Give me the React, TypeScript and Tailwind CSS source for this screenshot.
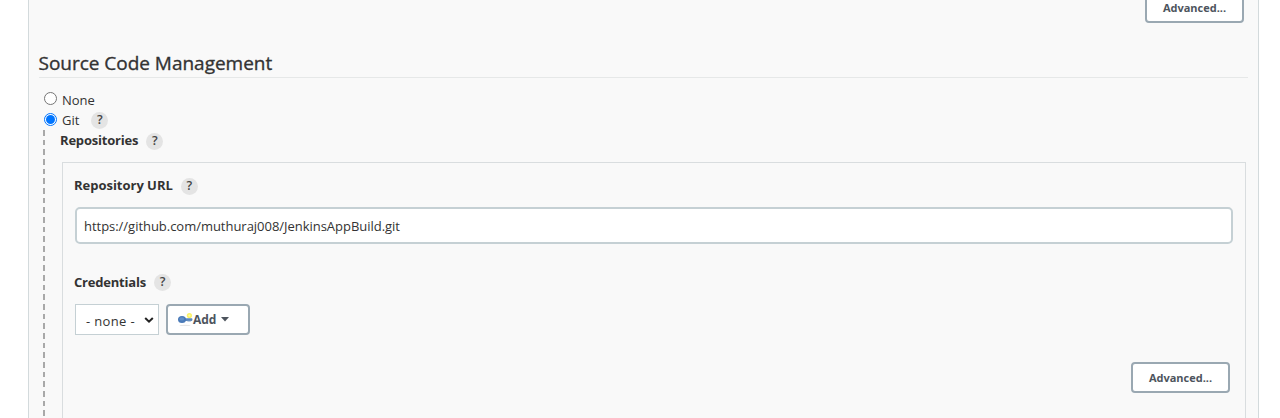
import React from "react";

function Help({ className = "" }: { className?: string }) {
  return (
    <span className={`flex h-[17px] w-[17px] items-center justify-center rounded-full bg-[#e4e4e4] text-[12.5px] font-semibold leading-none tracking-normal text-[#444] ${className}`}>
      ?
    </span>
  );
}

function AdvancedButton() {
  return (
    <button className="flex h-[31px] w-[99px] items-center justify-center rounded-[4px] border-2 border-[#9aa8b2] bg-white text-[11px] font-bold leading-none text-[#4d545d]">
      <span>Advanced...</span>
    </button>
  );
}

function KeyIcon() {
  return (
    <svg className="h-4 w-4 shrink-0" viewBox="0 0 16 16">
      <ellipse cx="8" cy="13.4" rx="5.5" ry="0.7" fill="#e6e6e6" />
      <circle cx="12.4" cy="3.6" r="2.6" fill="#fbf266" />
      <circle cx="12.4" cy="3.6" r="1.1" fill="#fffbb0" />
      <path d="M7 6.2h7.6q.8 0 .8.9v1q0 .8-.8.8H7z" fill="#5b87bd" />
      <path d="M10.4 8.6h3.4v.9h-3.4z" fill="#7c9fc9" />
      <ellipse cx="5" cy="7.6" rx="4" ry="3.5" fill="#4a7ab8" />
      <ellipse cx="4.8" cy="6.9" rx="2.4" ry="1.7" fill="#628fc8" />
    </svg>
  );
}

export default function App() {
  return (
    <div className="h-[418px] overflow-hidden bg-white pl-7 pr-[21px] font-['Open_Sans','Noto_Sans',sans-serif] text-[13px] text-[#333]">
      <div className="flex h-full flex-col border-x border-[#d3dadc] bg-[#f9f9f9] pl-[10px] pr-[10px]">
        <div className="-mt-2 mr-1 flex shrink-0 justify-end">
          <AdvancedButton />
        </div>
        <h2 className="mt-[26px] flex h-[29px] shrink-0 items-center border-b border-[#e6e8e8] text-[19px] leading-none text-[#333] [-webkit-text-stroke:0.35px_#333]">
          <span className="-ml-[0.5px] tracking-[-0.02px]">Source Code Management</span>
        </h2>
        <div className="mt-[12px] flex h-5 shrink-0 items-center pl-[5px]">
          <span className="mb-[3px] h-[13px] w-[13px] rounded-full border border-[#767676] bg-white" />
          <span className="ml-[5px] pt-[2px]">None</span>
        </div>
        <div className="flex h-5 shrink-0 items-center pl-[5px]">
          <span className="mb-[2px] flex h-[13px] w-[13px] items-center justify-center rounded-full border border-[#0075ff] bg-white">
            <span className="h-[9px] w-[9px] rounded-full bg-[#0075ff]" />
          </span>
          <span className="ml-[5px] pt-[2px]">Git</span>
          <Help className="ml-[12px]" />
        </div>
        <div className="flex min-h-0 flex-1 pl-[4px]">
          <div className="w-[2px] shrink-0 bg-[repeating-linear-gradient(to_bottom,#a9a9a9_0px,#a9a9a9_5.7px,transparent_5.7px,transparent_9.67px)]" />
          <div className="flex min-w-0 flex-1 flex-col pl-[15px]">
            <div className="flex h-[22px] shrink-0 items-center font-bold">
              <span className="tracking-[-0.2px]">Repositories</span>
              <Help className="ml-2" />
            </div>
            <div className="ml-[2px] mr-[2px] mt-[10px] flex flex-1 flex-col border-x border-t border-[#d9dddf] pl-3 pr-3">
              <div className="mt-[13px] flex h-5 shrink-0 items-center font-bold">
                <span className="-ml-px tracking-[-0.02px]">Repository URL</span>
                <Help className="ml-2" />
              </div>
              <div className="mt-[11px] flex h-[37px] shrink-0 items-center rounded-[5px] border-2 border-[#c5d0d4] bg-white pl-[7px]">
                <span className="pt-[2px] tracking-[-0.03px]">https://github.com/muthuraj008/JenkinsAppBuild.git</span>
              </div>
              <div className="mt-[28px] flex h-5 shrink-0 items-center font-bold">
                <span className="-ml-px pt-[1px] tracking-[-0.2px]">Credentials</span>
                <Help className="ml-2" />
              </div>
              <div className="mt-[12px] flex h-[31px] shrink-0 gap-[7px]">
                <div className="flex w-[84px] items-center justify-between border border-[#c5d0d4] bg-white pl-[10px] pr-[4px]">
                  <span className="pt-[4px] tracking-[0.35px]">- none -</span>
                  <svg className="h-[10px] w-[10px]" viewBox="0 0 10 10">
                    <path d="M1.2 3 5 6.7 8.8 3" fill="none" stroke="#222" strokeWidth="2" />
                  </svg>
                </div>
                <button className="flex w-[84px] items-center rounded-[4px] border-2 border-[#9aa8b2] bg-white pl-[9px] text-[12px] font-bold leading-none text-[#4d545d]">
                  <KeyIcon />
                  <span className="tracking-[-0.1px]">Add</span>
                  <svg className="ml-[5px] h-[5px] w-[8px]" viewBox="0 0 8 5">
                    <path d="M0 0h8L4 4.5z" fill="#4d545d" />
                  </svg>
                </button>
              </div>
              <div className="mr-[3px] mt-[27px] flex justify-end">
                <AdvancedButton />
              </div>
            </div>
          </div>
        </div>
      </div>
    </div>
  );
}
